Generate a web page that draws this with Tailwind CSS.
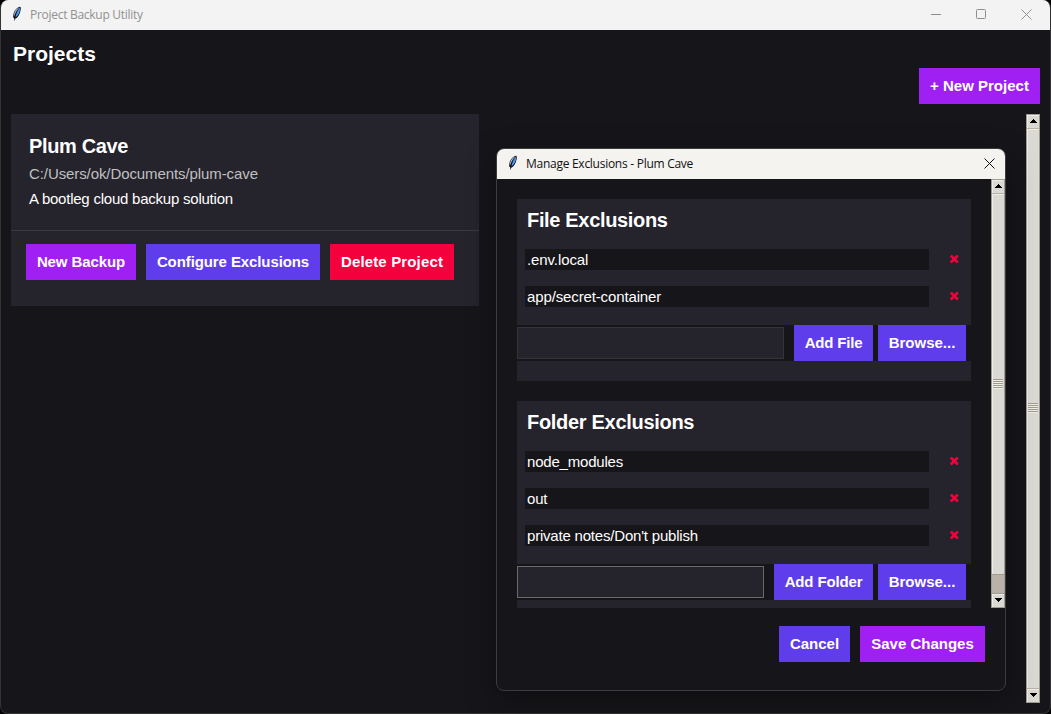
<!DOCTYPE html>
<html lang="en">
<head>
<meta charset="utf-8">
<title>Project Backup Utility</title>
<script src="https://cdn.jsdelivr.net/npm/@tailwindcss/browser@4"></script>
</head>
<body class="bg-black font-['Liberation_Sans',Arial,sans-serif] text-[15px] text-white overflow-hidden">
<svg class="hidden">
  <symbol id="feather" viewBox="0 0 10 16">
    <path d="M8.2.7C5.2 1.2 2.2 4.400 1.500 7.700L1.100 11.200 2.200 12.600 2.500 15.300 3.300 12.700C6 11.300 8 8.200 8.600 4.200 8.900 2.500 8.900 1.200 8.200.7Z" fill="#10151d"/>
    <path d="M7.800 1.500C6.300 3.500 4.400 6.500 3.500 11.200 6.200 9.500 7.700 6.800 8 4Z" fill="#4a96f0"/>
    <path d="M7.200 1.500C4.300 2.600 2.500 5.300 2 8.300L2.200 10.200C3.200 6.800 5 4 7.200 1.500Z" fill="#a9c4e2"/>
  </symbol>
  <symbol id="close" viewBox="0 0 11 11"><path d="M.5.5l10 10M10.500.5l-10 10" stroke="currentColor" stroke-width="1" fill="none"/></symbol>
  <symbol id="up" viewBox="0 0 7 4"><path d="M3 0h1v1h1v1h1v1h1v1H0V3h1V2h1V1h1z" fill="#000"/></symbol>
  <symbol id="down" viewBox="0 0 7 4"><path d="M3 4h1V3h1V2h1V1h1V0H0v1h1v1h1v1h1z" fill="#000"/></symbol>
</svg>

<div class="w-[1051px] h-[714px] flex flex-col rounded-lg border border-t-0 border-[#333336] bg-[#161519] overflow-hidden">
  <header class="h-[30px] shrink-0 flex items-center bg-[#f3f3f3] text-[#919191]">
    <svg class="w-[10px] h-4 ml-[11px] -mt-[3px]"><use href="#feather"/></svg>
    <span class="ml-2 flex-1 font-['Open_Sans','Noto_Sans',sans-serif] text-[12px] leading-4 tracking-[-0.28px]">Project Backup Utility</span>
    <div class="flex items-center gap-[35px] mr-[18px] -mt-[2px]">
      <svg class="w-[10px] h-[11px]"><path d="M0 5.500h10" stroke="#8e8e8e"/></svg>
      <svg class="w-[10px] h-[10px]"><rect x=".5" y=".5" width="9" height="9" rx="1" fill="none" stroke="#8e8e8e"/></svg>
      <svg class="w-[11px] h-[11px]"><use href="#close"/></svg>
    </div>
  </header>

  <main class="flex-1 flex flex-col pl-[10px] pr-[10px] pb-[10px]">
    <h1 class="h-[38px] pt-[11px] pl-[2px] text-[21px] leading-[26px] font-bold">Projects</h1>
    <div class="flex justify-end h-[46px]">
      <button class="w-[121px] h-9 bg-[#a020f3] font-bold">+ New Project</button>
    </div>
    <div class="flex-1 flex justify-between">
      <article class="w-[468px] h-[192px] bg-[#25232c]">
        <div class="h-[117px] pt-[19px] pl-[18px] border-b border-[#3a3842]">
          <h2 class="text-[20px] leading-[26px] font-bold tracking-[-0.35px]">Plum Cave</h2>
          <p class="mt-[3px] leading-[24px] text-[#c0c0c0] tracking-[-0.09px]">C:/Users/ok/Documents/plum-cave</p>
          <p class="mt-px leading-[24px] tracking-[-0.23px]">A bootleg cloud backup solution</p>
        </div>
        <div class="flex gap-[10px] pt-[13px] pl-[15px]">
          <button class="w-[110px] h-9 bg-[#a020f3] font-bold tracking-[-0.1px]">New Backup</button>
          <button class="w-[174px] h-9 bg-[#5f3dea] font-bold tracking-[-0.1px]">Configure Exclusions</button>
          <button class="w-[124px] h-9 bg-[#f4003d] font-bold tracking-[0.15px]">Delete Project</button>
        </div>
      </article>
      <div class="w-[14px] flex flex-col bg-[#b8b2a7] border border-[#9f9b8f]">
        <div class="h-[13px] pt-[3px] pl-[2px] bg-[#dad9d3] border-t border-l border-[#efede7]"><svg class="w-[7px] h-1"><use href="#up"/></svg></div>
        <div class="mt-px flex-1 flex items-center bg-[#dad9d3] border-t border-l border-[#efede7]">
          <div class="w-[10px] h-[10px] -mt-[2px] bg-[repeating-linear-gradient(#9f9b8f_0_1px,#efede7_1px_2px)]"></div>
        </div>
        <div class="mt-px h-[13px] pt-[3px] pl-[2px] bg-[#dad9d3] border-t border-l border-[#efede7]"><svg class="w-[7px] h-1"><use href="#down"/></svg></div>
      </div>
    </div>
  </main>
</div>

<section class="absolute left-[496px] top-[148px] w-[510px] h-[543px] flex flex-col rounded-lg border border-[#3d3d3f] bg-[#161519] overflow-hidden shadow-[0_10px_30px_rgba(0,0,0,0.35)]">
  <header class="h-[30px] shrink-0 flex items-center bg-[#f4f3f0] text-[#111]">
    <svg class="w-[10px] h-4 ml-[11px] -mt-[3px]"><use href="#feather"/></svg>
    <span class="ml-2 flex-1 font-['Open_Sans','Noto_Sans',sans-serif] text-[12px] leading-4 tracking-[-0.27px]">Manage Exclusions - Plum Cave</span>
    <svg class="w-[11px] h-[11px] mr-[10px] -mt-[2px]"><use href="#close"/></svg>
  </header>

  <div class="h-[429px] flex justify-between overflow-hidden">
    <div class="w-[454px] ml-5 pt-5 flex flex-col gap-5">
      <div class="h-[182px] shrink-0 bg-[#25232c]">
        <h2 class="h-[50px] pt-2 pl-[10px] text-[20px] leading-[26px] font-bold tracking-[-0.33px]">File Exclusions</h2>
        <ul class="h-[76px] pl-2 flex flex-col gap-4 leading-[21px]">
          <li class="flex"><span class="w-[404px] h-[21px] pl-[2px] bg-[#161519] tracking-[-0.1px]">.env.local</span><button class="ml-2 w-[34px] h-[19px] leading-[19px] font-bold text-[#f4003d] [-webkit-text-stroke:0.8px_#f4003d]">×</button></li>
          <li class="flex"><span class="w-[404px] h-[21px] pl-[2px] bg-[#161519] tracking-[-0.13px]">app/secret-container</span><button class="ml-2 w-[34px] h-[19px] leading-[19px] font-bold text-[#f4003d] [-webkit-text-stroke:0.8px_#f4003d]">×</button></li>
        </ul>
        <div class="h-9 flex items-center bg-[#161519]">
          <div class="w-[267px] h-8 mr-[10px] bg-[#25232c] border border-[#35343b]"></div>
          <button class="w-[79px] h-9 mr-[5px] bg-[#5f3dea] font-bold tracking-[-0.2px]">Add File</button>
          <button class="w-[88px] h-9 bg-[#5f3dea] font-bold">Browse...</button>
        </div>
      </div>
      <div class="h-[219px] shrink-0 bg-[#25232c]">
        <h2 class="h-[50px] pt-2 pl-[10px] text-[20px] leading-[26px] font-bold tracking-[-0.3px]">Folder Exclusions</h2>
        <ul class="h-[113px] pl-2 flex flex-col gap-4 leading-[21px]">
          <li class="flex"><span class="w-[404px] h-[21px] pl-[2px] bg-[#161519] tracking-[-0.2px]">node_modules</span><button class="ml-2 w-[34px] h-[19px] leading-[19px] font-bold text-[#f4003d] [-webkit-text-stroke:0.8px_#f4003d]">×</button></li>
          <li class="flex"><span class="w-[404px] h-[21px] pl-[2px] bg-[#161519] tracking-[-0.2px]">out</span><button class="ml-2 w-[34px] h-[19px] leading-[19px] font-bold text-[#f4003d] [-webkit-text-stroke:0.8px_#f4003d]">×</button></li>
          <li class="flex"><span class="w-[404px] h-[21px] pl-[2px] bg-[#161519] tracking-[-0.2px]">private notes/Don't publish</span><button class="ml-2 w-[34px] h-[19px] leading-[19px] font-bold text-[#f4003d] [-webkit-text-stroke:0.8px_#f4003d]">×</button></li>
        </ul>
        <div class="h-9 flex items-center bg-[#161519]">
          <div class="w-[247px] h-8 mr-[10px] bg-[#25232c] border border-[#696969]"></div>
          <button class="w-[99px] h-9 mr-[5px] bg-[#5f3dea] font-bold tracking-[-0.15px]">Add Folder</button>
          <button class="w-[88px] h-9 bg-[#5f3dea] font-bold">Browse...</button>
        </div>
      </div>
    </div>
    <div class="w-[14px] flex flex-col bg-[#b8b2a7] border border-[#9f9b8f]">
      <div class="h-[13px] pt-[3px] pl-[2px] bg-[#dad9d3] border-t border-l border-[#efede7]"><svg class="w-[7px] h-1"><use href="#up"/></svg></div>
      <div class="mt-px h-[380px] flex items-center bg-[#dad9d3] border-t border-l border-[#efede7]">
        <div class="w-[10px] h-[10px] -mt-[2px] bg-[repeating-linear-gradient(#9f9b8f_0_1px,#efede7_1px_2px)]"></div>
      </div>
      <div class="h-[20px] border-y border-[#9f9b8f]"></div>
      <div class="h-[13px] pt-[3px] pl-[2px] bg-[#dad9d3] border-t border-l border-[#efede7]"><svg class="w-[7px] h-1"><use href="#down"/></svg></div>
    </div>
  </div>

  <footer class="flex justify-end gap-[10px] pt-[18px] pr-5">
    <button class="w-[71px] h-9 bg-[#5f3dea] font-bold">Cancel</button>
    <button class="w-[125px] h-9 bg-[#a020f3] font-bold">Save Changes</button>
  </footer>
</section>
</body>
</html>
